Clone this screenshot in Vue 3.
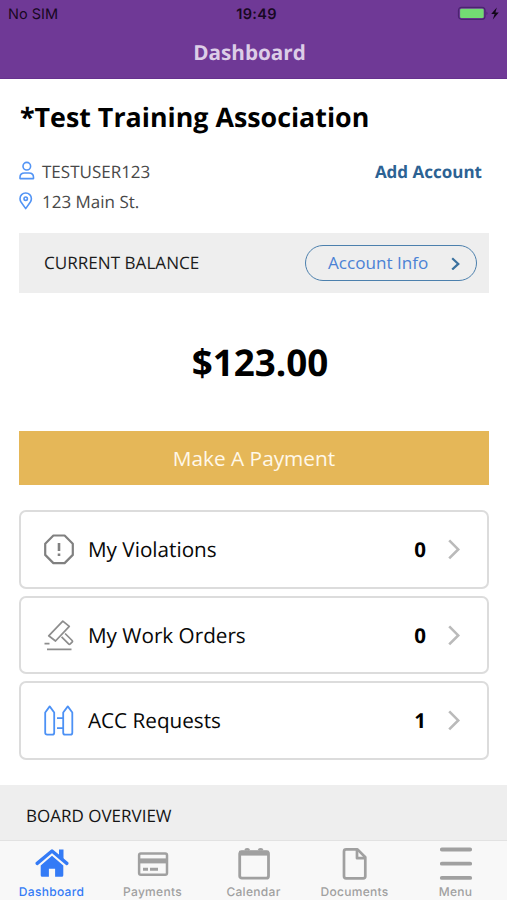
<script setup>
const cards = [
  { icon: 'alert', label: 'My Violations', count: 0 },
  { icon: 'gavel', label: 'My Work Orders', count: 0 },
  { icon: 'fence', label: 'ACC Requests', count: 1 },
]
const tabs = [
  { icon: 'home', label: 'Dashboard', active: true },
  { icon: 'payments', label: 'Payments' },
  { icon: 'calendar', label: 'Calendar' },
  { icon: 'document', label: 'Documents' },
  { icon: 'menu', label: 'Menu' },
]
</script>

<template>
  <div class="screen">
    <header class="header">
      <div class="status">
        <span class="carrier">No SIM</span>
        <span class="time">19:49</span>
        <svg class="battery" width="46" height="16" viewBox="0 0 46 16">
          <rect x="1.5" y="1.3" width="26.5" height="12" rx="3" fill="none" stroke="#4b2470" stroke-width="1.2" />
          <rect x="3.1" y="2.8" width="23.6" height="9.2" rx="1.3" fill="#73db73" />
          <path d="M29.5 5.5q2 1.8 0 3.6z" fill="#4b2470" />
          <path d="M39.8 1.5L34.2 8h3.4l-1.8 5.4 6-6.9h-3.4z" fill="#120719" />
        </svg>
      </div>
      <h1 class="page-title">Dashboard</h1>
    </header>

    <main class="content">
      <h2 class="association">*Test Training Association</h2>
      <div class="profile">
        <div class="details">
          <div class="detail">
            <svg width="16" height="20" viewBox="0 0 16 20" fill="none" stroke="#5294f5" stroke-width="1.6">
              <circle cx="7.8" cy="5.2" r="3.8" />
              <path d="M1 17.6v-1.3q0-4.3 4.6-4.3h4.3q4.6 0 4.6 4.3v1.3z" stroke-linejoin="round" />
            </svg>
            <span>TESTUSER123</span>
          </div>
          <div class="detail">
            <svg width="16" height="20" viewBox="0 0 16 20" fill="none" stroke="#5294f5" stroke-width="1.6">
              <path d="M6.7 17.6L2.2 11.3Q1 9.5 1 7.7a5.7 5.7 0 0 1 11.4 0q0 1.8-1.2 3.6z" stroke-linejoin="round" />
              <circle cx="6.7" cy="7.7" r="1.7" />
            </svg>
            <span>123 Main St.</span>
          </div>
        </div>
        <a class="add-account">Add Account</a>
      </div>

      <section class="balance-bar">
        <span class="balance-label">CURRENT BALANCE</span>
        <button class="info-button">
          <span>Account Info</span>
          <svg width="10" height="14" viewBox="0 0 10 14" fill="none" stroke="#3b719f" stroke-width="2.2">
            <path d="M1.2 2.3l6.1 5.6-6.1 5.6" />
          </svg>
        </button>
      </section>

      <div class="amount"><span>$123.00</span></div>
      <button class="pay-button"><span>Make A Payment</span></button>

      <section class="cards">
        <article v-for="card in cards" :key="card.label" class="card">
          <svg v-if="card.icon === 'alert'" width="30" height="32" viewBox="0 0 30 32" fill="none" stroke="#808080" stroke-width="2.2">
            <path d="M9.4 2.5h11.2l8.2 8.2v11.2l-8.2 8.2H9.4l-8.2-8.2V10.7z" stroke-linejoin="round" />
            <path d="M15 10v8.1M15 20.5V23" stroke-width="2.6" />
          </svg>
          <svg v-else-if="card.icon === 'gavel'" width="30" height="32" viewBox="0 0 30 32" fill="none" stroke="#8d8d8d" stroke-width="1.7" stroke-linejoin="round">
            <path d="M18.8 2.2l6.5 5.2L11.5 22 4.7 16.8z" />
            <path d="M21.1 14.5l7 7q.8.8 0 1.6l-1.8 1.8q-.9.8-1.7 0l-7-7" />
            <path d="M.5 24.6h5M3 30.3h24.5" />
          </svg>
          <svg v-else width="30" height="32" viewBox="0 0 30 32" fill="none" stroke="#4c91f5" stroke-width="1.8" stroke-linejoin="round">
            <path d="M1.2 8.5L5.7 2.4l4.5 6.1v20.2q0 2-2 2H3.2q-2 0-2-2z" />
            <path d="M19.2 8.5l4.6-6.1 4.5 6.1v20.2q0 2-2 2h-5.1q-2 0-2-2zM13 14.2h6M13 24.2h6" />
          </svg>
          <span class="card-label">{{ card.label }}</span>
          <span class="count">{{ card.count }}</span>
          <svg width="14" height="22" viewBox="0 0 14 22" fill="none" stroke="#bababa" stroke-width="2.6">
            <path d="M2.2 2.4l9 9-9 9" />
          </svg>
        </article>
      </section>
    </main>

    <section class="board"><span>BOARD OVERVIEW</span></section>

    <nav class="tabs">
      <a v-for="tab in tabs" :key="tab.label" class="tab" :class="{ active: tab.active }">
        <svg v-if="tab.icon === 'home'" width="34" height="34" viewBox="0 0 34 34" fill="currentColor">
          <path d="M2.2 16.4L17 4l14.8 12.4" fill="none" stroke="currentColor" stroke-width="3.4" stroke-linejoin="round" stroke-linecap="round" />
          <path d="M24 2.6h4.5v12L24 10.6z" />
          <path d="M17 8.8l11.3 9.8v9.7q0 1.5-1.5 1.5h-6.7v-8h-6.2v8H7.2q-1.5 0-1.5-1.5v-9.7z" />
          <path d="M4.4 18.2L17 7.6l12.6 10.6" fill="none" stroke="#f8f8f8" stroke-width="1" />
        </svg>
        <svg v-else-if="tab.icon === 'payments'" width="34" height="34" viewBox="0 0 34 34" fill="none" stroke="currentColor">
          <rect x="3.1" y="6.4" width="27.9" height="21.4" rx="1.8" stroke-width="2.5" />
          <path d="M3 13.9h28" stroke-width="5" />
          <path d="M7 22.3h5M14 22.3h8" stroke-width="3" />
        </svg>
        <svg v-else-if="tab.icon === 'calendar'" width="34" height="34" viewBox="0 0 34 34" fill="none" stroke="currentColor">
          <rect x="2.7" y="4.6" width="28.8" height="26.5" rx="2.2" stroke-width="2.8" />
          <path d="M2 6.2h30" stroke-width="4.8" />
          <path d="M8 3q2.2-1.8 4.4 0M21.4 3q2.2-1.8 4.4 0" stroke-width="2" />
        </svg>
        <svg v-else-if="tab.icon === 'document'" width="34" height="34" viewBox="0 0 34 34" fill="none" stroke="currentColor" stroke-width="2.7" stroke-linejoin="round">
          <path d="M8.1 2.4h11.4l7.8 7.9v18.9q0 2.1-2.1 2.1H8.1Q6 31.3 6 29.2V4.5q0-2.1 2.1-2.1z" />
          <path d="M19 2.8v8.4h8" />
        </svg>
        <svg v-else width="34" height="34" viewBox="0 0 34 34" fill="none" stroke="currentColor" stroke-width="3.8" stroke-linecap="round">
          <path d="M2.8 2.5h28.4M2.8 16.7h28.4M2.8 30.9h28.4" />
        </svg>
        <span>{{ tab.label }}</span>
      </a>
    </nav>
  </div>
</template>

<style>
body {
  margin: 0;
  background: #fff;
}
</style>

<style scoped>
.screen {
  width: 507px;
  height: 900px;
  display: flex;
  flex-direction: column;
  overflow: hidden;
  font-family: "Open Sans", "Noto Sans", sans-serif;
  text-rendering: geometricPrecision;
  background: #fff;
  color: #080808;
  white-space: nowrap;
}
.screen * { box-sizing: border-box; }
button { font: inherit; margin: 0; padding: 0; cursor: pointer; }
svg { display: block; flex: none; }

.header { height: 79px; background: #6f3996; flex: none; border-bottom: 1px solid #66318e; }
.status {
  display: grid;
  grid-template-columns: 1fr auto 1fr;
  align-items: center;
  height: 28px;
  padding: 0 4px 0 8px;
  font: 14.5px/26px Inter, sans-serif;
  color: #180822;
}
.carrier, .time { padding-top: 2px; }
.time { font-weight: 600; letter-spacing: 0.3px; padding-left: 2px; }
.battery { justify-self: end; }
.page-title {
  margin: 0;
  padding-right: 8px;
  text-align: center;
  font-size: 20.7px;
  line-height: 51px;
  font-weight: 700;
  color: #dccde7;
}

.content { padding: 0 18px 0 19px; }
.association { margin: 0; padding: 18px 0 0 1px; font-size: 26.8px; line-height: 40px; font-weight: 700; color: #000; }
.profile { display: flex; justify-content: space-between; padding: 19px 7px 0 0; height: 96px; }
.detail { display: flex; align-items: center; gap: 7px; height: 30px; font-size: 17px; color: #484848; }
.add-account { padding-top: 1px; font-size: 17px; line-height: 30px; font-weight: 700; color: #2c6293; }

.balance-bar {
  display: flex;
  align-items: center;
  justify-content: space-between;
  height: 60px;
  padding: 0 12px 0 25px;
  background: #eee;
}
.balance-label { padding-top: 2px; line-height: 24px; font-size: 17.1px; color: #1c1c1c; }
.info-button {
  display: flex;
  align-items: center;
  justify-content: space-between;
  width: 172px;
  height: 36px;
  padding: 0 15px 1px 22px;
  border: 1.5px solid #4c80ad;
  border-radius: 18px;
  background: transparent;
  font-size: 17.1px;
  color: #4b82d5;
}
.amount { height: 138px; padding-left: 12px; text-align: center; font-size: 36.8px; line-height: 138px; font-weight: 700; color: #000; }
.pay-button {
  display: block;
  width: 100%;
  height: 54px;
  border: 0;
  background: #e5b758;
  color: #fff8e9;
  font-size: 20.8px;
}

.cards { display: flex; flex-direction: column; gap: 7px; padding-top: 25px; }
.card {
  display: flex;
  align-items: center;
  height: 78.5px;
  padding: 0 26px 0 23px;
  border: 2px solid #dcdcdc;
  border-radius: 7px;
}
.card-label { flex: 1; padding: 2px 0 0 14px; font-size: 20.7px; }
.count { margin-right: 21px; padding-top: 2px; font-size: 20.5px; font-weight: 700; color: #000; }

.board { flex: none; height: 55px; margin-top: 25px; padding-left: 26px; background: #eee; font-size: 17px; line-height: 61px; color: #151515; }
.tabs { display: grid; grid-template-columns: repeat(5, 101px); justify-content: center; flex: none; height: 60px; border-top: 1px solid #e2e2e2; background: #f8f8f8; }
.tab { display: flex; flex-direction: column; align-items: center; padding-top: 6px; font: 500 12px/21px Inter, sans-serif; letter-spacing: 0.3px; color: #a0a0a0; }
.tab.active { color: #347bf6; }
</style>
